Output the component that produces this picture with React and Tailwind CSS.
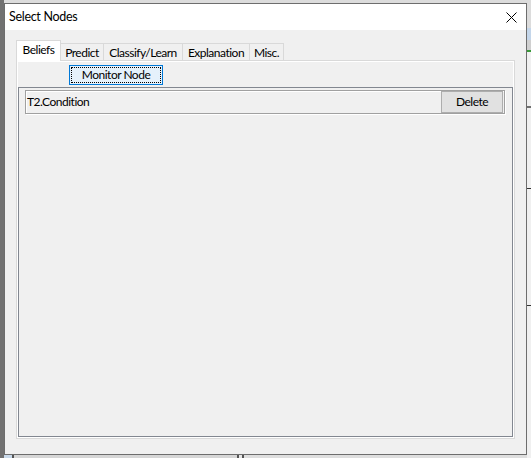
import { useState } from "react";

const TABS = [
  { label: "Beliefs", w: "w-[45px]" },
  { label: "Predict", w: "w-[43px]" },
  { label: "Classify/Learn", w: "w-[79px]" },
  { label: "Explanation", w: "w-[67px]" },
  { label: "Misc.", w: "w-[34px]" },
];

function CloseIcon() {
  return (
    <svg width="11" height="11" viewBox="0 0 11 11" className="block">
      <path d="M0.5 0.5 L10.5 10.5 M10.5 0.5 L0.5 10.5" stroke="#000" strokeWidth="1" fill="none" />
    </svg>
  );
}

function TabStrip({ active, onSelect }) {
  return (
    <div className="flex items-end h-[20px]">
      {TABS.map((t, i) =>
        i === active ? (
          <button
            key={t.label}
            onClick={() => onSelect(i)}
            className={`${t.w} h-[21px] -mb-px relative z-10 bg-white border border-b-0 border-[#d9d9d9] flex items-center justify-center pb-[2px]`}
          >
            {t.label}
          </button>
        ) : (
          <button
            key={t.label}
            onClick={() => onSelect(i)}
            className={`${t.w} h-[17px] bg-[#f0f0f0] border-t border-r border-[#d9d9d9] flex items-center justify-center pt-px`}
          >
            {t.label}
          </button>
        )
      )}
    </div>
  );
}

function MonitoredRow({ name }) {
  return (
    <div className="ml-[6px] mr-[7px] mt-[2px] h-[24px] border border-[#a0a0a0] shadow-[inset_1px_1px_0_#fff,1px_1px_0_#fff] flex items-center justify-between">
      <span className="pl-px">{name}</span>
      <button className="mr-px w-[62px] h-[22px] bg-[#e1e1e1] border border-[#adadad] flex items-center justify-center">
        Delete
      </button>
    </div>
  );
}

export default function App() {
  const [tab, setTab] = useState(0);

  return (
    <div
      className="w-[531px] h-[458px] flex bg-[#dcdcdc] text-[12px] tracking-[-0.5px] text-black overflow-hidden"
      style={{ fontFamily: 'Lato, "Noto Sans", sans-serif' }}
    >
      {/* strip of the app behind, left side */}
      <div className="w-[4px] h-full bg-[#717171]" />

      <div className="w-[523px] flex flex-col">
        <div className="h-[3px] bg-[#dcdcdc]" />

        {/* dialog window */}
        <div className="h-[452px] border border-[#6d6d6d] bg-[#f0f0f0] flex flex-col">
          <div className="h-[26px] bg-white flex items-center justify-between pl-[4px] pr-[9px]">
            <span className="text-[12.5px] tracking-[-0.3px]">Select Nodes</span>
            <CloseIcon />
          </div>

          <div className="flex-1 flex flex-col pt-[10px] pl-[11px] pr-[11px] pb-[15px]">
            <TabStrip active={tab} onSelect={setTab} />

            <div className="flex-1 border border-[#d9d9d9] flex flex-col">
              <div className="flex-1 border border-white flex flex-col">
                <div className="pl-[51px] pt-[3px]">
                  <button className="w-[94px] h-[20px] bg-[#e5f1fb] border border-[#0078d7] p-px flex">
                    <span className="flex-1 border border-dotted border-black flex items-center justify-center">
                      Monitor Node
                    </span>
                  </button>
                </div>

                <div className="mt-[2px] flex-1 border border-[#828790] bg-[#f0f0f0]">
                  <MonitoredRow name="T2.Condition" />
                </div>
              </div>
            </div>
          </div>
        </div>

        {/* strip of the app behind, bottom */}
        <div className="h-[3px] flex">
          <div className="w-[8px] bg-[#c9d9ea]" />
          <div className="w-[2px] bg-[#555]" />
          <div className="w-[223px] bg-[#d6d6d6]" />
          <div className="w-[2px] bg-[#555]" />
          <div className="w-[3px] bg-[#e6e6e6]" />
          <div className="w-[2px] bg-[#555]" />
          <div className="flex-1 bg-[#dedede]" />
        </div>
      </div>

      {/* strip of the app behind, right side */}
      <div className="w-[4px] flex flex-col">
        <div className="h-[28px] bg-[#dcdcdc]" />
        <div className="h-[12px] bg-[#c4d6ea]" />
        <div className="h-[10px] bg-[#d0d0d0]" />
        <div className="h-[2px] bg-[#3a9a3a]" />
        <div className="h-[54px] bg-[#f0f0f0]" />
        <div className="h-[2px] bg-[#6f6f6f]" />
        <div className="h-[80px] bg-[#f0f0f0]" />
        <div className="h-px bg-[#333]" />
        <div className="h-[116px] bg-[#f0f0f0]" />
        <div className="h-px bg-[#333]" />
        <div className="flex-1 bg-[#f0f0f0]" />
      </div>
    </div>
  );
}
